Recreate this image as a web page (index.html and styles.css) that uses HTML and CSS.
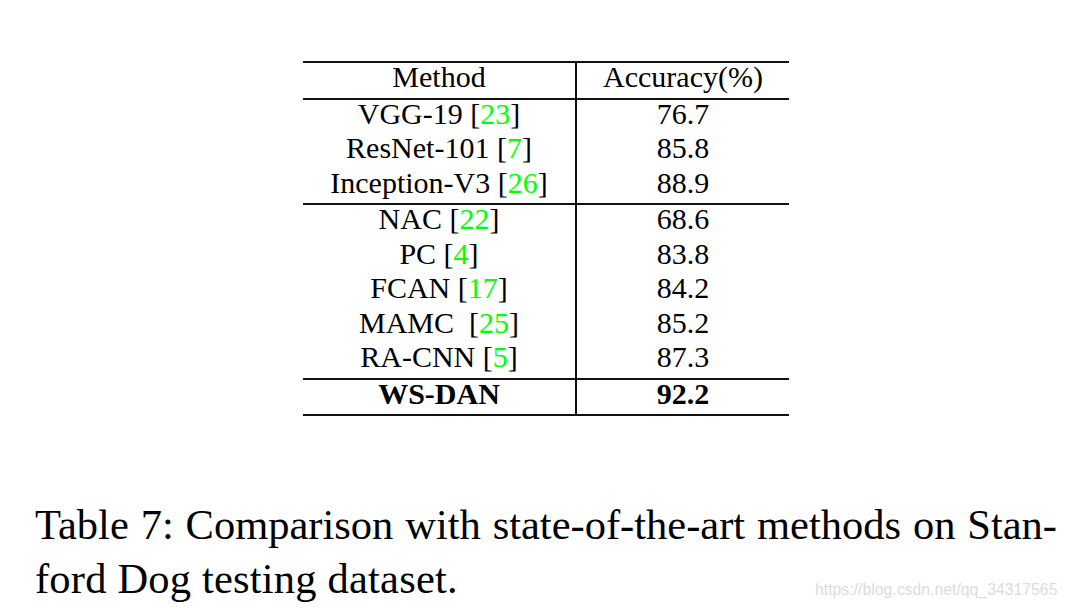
FILE: index.html
```html
<!DOCTYPE html>
<html>
<head>
<meta charset="utf-8">
<link rel="stylesheet" href="styles.css">
</head>
<body>
<div class="page">
  <table class="results">
    <thead>
      <tr><th class="c1">Method</th><th class="c2">Accuracy(%)</th></tr>
    </thead>
    <tbody>
      <tr><td class="c1">VGG-19 [<span class="cite">23</span>]</td><td class="c2">76.7</td></tr>
      <tr><td class="c1">ResNet-101 [<span class="cite">7</span>]</td><td class="c2">85.8</td></tr>
      <tr class="grp-end"><td class="c1">Inception-V3 [<span class="cite">26</span>]</td><td class="c2">88.9</td></tr>
      <tr><td class="c1">NAC [<span class="cite">22</span>]</td><td class="c2">68.6</td></tr>
      <tr><td class="c1">PC [<span class="cite">4</span>]</td><td class="c2">83.8</td></tr>
      <tr><td class="c1">FCAN [<span class="cite">17</span>]</td><td class="c2">84.2</td></tr>
      <tr><td class="c1">MAMC&nbsp; [<span class="cite">25</span>]</td><td class="c2">85.2</td></tr>
      <tr class="grp-end"><td class="c1">RA-CNN [<span class="cite">5</span>]</td><td class="c2">87.3</td></tr>
      <tr class="best"><td class="c1">WS-DAN</td><td class="c2">92.2</td></tr>
    </tbody>
  </table>
  <p class="caption">
    <span class="line1">Table 7: Comparison with state-of-the-art methods on Stan-</span>
    <span class="line2">ford Dog testing dataset.</span>
  </p>
</div>
<div class="watermark">https://blog.csdn.net/qq_34317565</div>
</body>
</html>
```
FILE: styles.css
```css
html, body {
  margin: 0;
  padding: 0;
  background: #ffffff;
}
body {
  width: 1068px;
  height: 608px;
  position: relative;
  overflow: hidden;
  font-family: "Liberation Serif", "Times New Roman", serif;
  color: #000;
}
.page {
  padding: 61px 0 0 0;
}
.results {
  margin-left: 303px;
  width: 486px;
  border-collapse: collapse;
  table-layout: fixed;
  font-size: 30px;
  border-top: 2px solid #111;
  border-bottom: 2px solid #111;
}
.results th,
.results td {
  padding: 0 0 6.5px 0;
  height: 28px;
  line-height: 28px;
  text-align: center;
  vertical-align: top;
  font-weight: normal;
  white-space: nowrap;
}
.results .c1 {
  width: 272px;
}
.results .c2 {
  width: 212px;
  border-left: 2px solid #111;
}
.results thead tr {
  border-bottom: 2px solid #111;
}
.results tr.grp-end {
  border-bottom: 2px solid #111;
}
.results tr.best td {
  font-weight: bold;
}
.cite {
  color: #00ff00;
}
.caption {
  margin: 82px 0 0 35px;
  width: 1022px;
  font-size: 42.5px;
  line-height: 54px;
}
.caption .line1 {
  display: block;
  text-align: justify;
  text-align-last: justify;
}
.caption .line2 {
  display: block;
  letter-spacing: 0.2px;
}
.watermark {
  position: absolute;
  left: 815px;
  top: 581px;
  font-family: "Liberation Sans", Arial, sans-serif;
  font-size: 15.8px;
  color: #dcdcdc;
}
```
